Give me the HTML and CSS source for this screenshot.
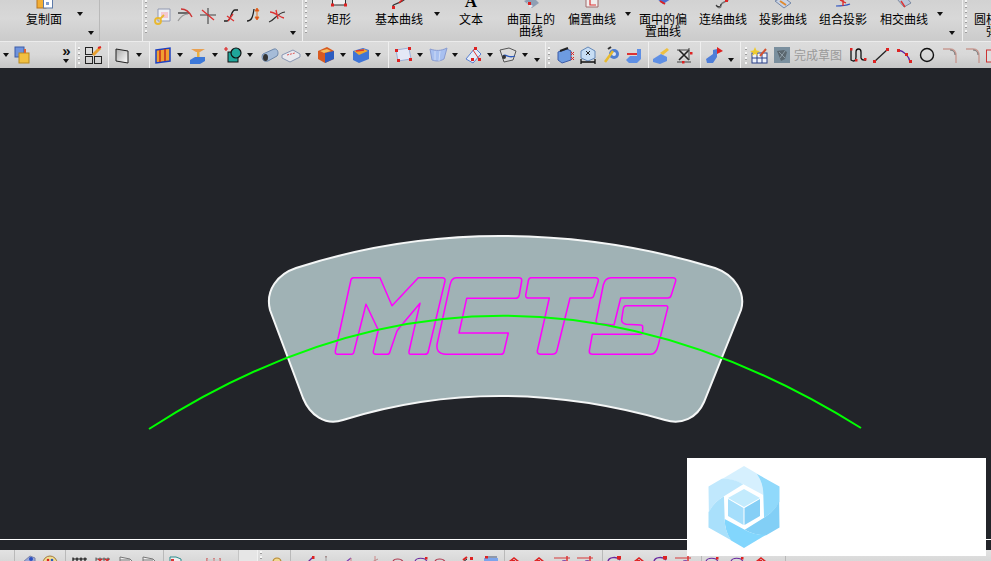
FILE: index.html
```html
<!DOCTYPE html>
<html lang="zh">
<head>
<meta charset="utf-8">
<title>MCTS</title>
<link rel="stylesheet" href="styles.css">
</head>
<body>
<svg class="defs" aria-hidden="true">
  <defs>
    <g id="t-copy"><rect x="3" y="-3" width="9" height="11" fill="#f2ae35" stroke="#b8741e"/><rect x="9.500" y="-2" width="9" height="10" fill="#fff" stroke="#5d7aa8"/><rect x="12" y="2" width="3" height="3" fill="#7c9cd0"/></g>
    <g id="t-rect"><rect x="3.500" y="-6" width="13" height="11" fill="#eee" stroke="#333"/><rect x="2" y="3.500" width="3" height="3" fill="#d22"/><rect x="15" y="3.500" width="3" height="3" fill="#d22"/></g>
    <g id="t-curve"><path d="M4 8C2 3 10 5 16 -1" fill="none" stroke="#333" stroke-width="1.300"/><rect x="3" y="6" width="3" height="3" fill="#d22"/><path d="M10 3L15 -2" stroke="#d22" stroke-width="1.500"/></g>
    <g id="t-surf"><path d="M3 1L12 -3L18 3L11 8Z" fill="#8f9fb4"/><path d="M6 2L12 6L9 8Z" fill="#e6e6ee"/><rect x="7" y="2" width="3" height="3" fill="#d22"/></g>
    <g id="t-offset"><path d="M4 -2H16V7H4Z" fill="#f0eeee" stroke="#a06a6a"/><path d="M8 -1V5H14" fill="none" stroke="#d33" stroke-width="1.200"/></g>
    <g id="t-face"><path d="M3 -2L10 4L18 -1Z" fill="#4c6cd0"/><path d="M7 1L12 4" stroke="#d22" stroke-width="2"/></g>
    <g id="t-join"><path d="M3 5C6 9 8 8 8 5C8 2 13 3 17 -2" fill="none" stroke="#777" stroke-width="1.500"/><path d="M3 5.500C6 8 8 6 8 4" fill="none" stroke="#222"/><rect x="12" y="0" width="3" height="2" fill="#d22"/></g>
    <g id="t-proj"><path d="M2 1L10 -3L18 3L11 8Z" fill="#c9d3e4" stroke="#7487a8"/><path d="M7 1L13 5" stroke="#e08a30" stroke-width="2"/></g>
    <g id="t-comb"><path d="M3 6C7 6 12 6 17 4" fill="none" stroke="#2a4fc0" stroke-width="1.200"/><path d="M10 -2V6M7 0L13 3" stroke="#d22" stroke-width="1.300"/></g>
    <g id="t-inter"><path d="M3 -1L12 -3L17 3L10 7Z" fill="#b9c5d8" stroke="#7c8aa0"/><path d="M7 1L11 7" stroke="#d33" stroke-width="1.400"/></g>

    <g id="m1"><path d="M6 3H18V15H6Z" fill="#eef0f6" stroke="#9098b0"/><rect x="9" y="6" width="7" height="6" fill="#f4c8d0"/><circle cx="6" cy="15" r="3" fill="none" stroke="#e8b830" stroke-width="1.800"/><path d="M8 13L12 9" stroke="#e8b830" stroke-width="1.800"/></g>
    <g id="m2"><path d="M3 7H14" stroke="#222" stroke-width="1.200"/><path d="M3 15C6 10 10 8 13 8" fill="none" stroke="#999" stroke-width="1.200"/><path d="M6 3C11 3 15 7 17 11" fill="none" stroke="#c33" stroke-width="1.300"/></g>
    <g id="m3"><path d="M10 2V18M2 9H18" stroke="#444" stroke-width="1.100"/><path d="M4 4L16 14" stroke="#d33" stroke-width="1.300"/></g>
    <g id="m4"><path d="M3 15H6C10 15 10 4 14 4H17" fill="none" stroke="#222" stroke-width="1.300"/><path d="M6 10L13 15M12 8L7 15" stroke="#d33" stroke-width="1.300"/></g>
    <g id="m5"><path d="M3 15C8 15 9 10 10 3" fill="none" stroke="#222" stroke-width="1.300"/><path d="M13 2L15 5H11ZM13 5V11M13 14L11 11H15Z" fill="#e03020" stroke="#e07020"/></g>
    <g id="m6"><path d="M2 16C8 14 10 7 18 6" fill="none" stroke="#333" stroke-width="1.200"/><path d="M3 6C8 6 12 11 17 12M9 4L11 13" fill="none" stroke="#d33" stroke-width="1.300"/></g>

    <g id="r1"><rect x="3" y="2" width="9" height="10" fill="#6f93dc" stroke="#3c5ca8"/><rect x="7" y="8" width="10" height="10" fill="#f2c040" stroke="#b88a20"/><rect x="12" y="4" width="2" height="4" fill="#e06030"/></g>
    <g id="r2"><rect x="2.500" y="2.500" width="7" height="7" fill="none" stroke="#222"/><rect x="2.500" y="11.500" width="7" height="7" fill="none" stroke="#222"/><rect x="11.500" y="11.500" width="7" height="7" fill="none" stroke="#222"/><path d="M10 10L17 3" stroke="#e8a030" stroke-width="3"/><path d="M15 3L18 2" stroke="#d22" stroke-width="2"/></g>
    <g id="r3"><path d="M4 4L16 6V18L4 16Z" fill="url(#gs)" stroke="#222"/></g>
    <g id="r4"><path d="M3 5L17 3V16L3 18Z" fill="#f2a030" stroke="#1d40c0" stroke-width="1.500"/><path d="M7 5V17M12 4V16" stroke="#c83020" stroke-width="1.600"/></g>
    <g id="r5"><path d="M3 4H17L12 7H8Z" fill="#e8a050"/><rect x="9" y="7" width="2.500" height="6" fill="#e8b040"/><path d="M2 15L7 12H17V16L12 19H2Z" fill="#3c78d8"/></g>
    <g id="r6"><rect x="5" y="7" width="10" height="10" fill="#1fa59a" stroke="#111"/><circle cx="13" cy="8" r="5" fill="#1fa59a" stroke="#111" stroke-width="1.200"/><path d="M3 2V6M1 4H5" stroke="#d22" stroke-width="1.200"/></g>
    <g id="r7"><path d="M3 9L14 4C18 3 19 9 17 11L8 16C2 18 1 11 3 9Z" fill="#a6bcd8" stroke="#6d87aa"/><ellipse cx="5.500" cy="12.500" rx="2.500" ry="3.500" fill="#333"/></g>
    <g id="r8"><path d="M1 10L12 5L19 9V12L9 17L1 13Z" fill="#e9e9ee" stroke="#8a97b4"/><path d="M6 10L14 8" stroke="#d55" stroke-dasharray="2 1"/></g>
    <g id="r9"><path d="M2 6L11 2L18 6V14L9 18L2 14Z" fill="#d85a20"/><path d="M9 8L18 6V14L9 18Z" fill="#2d5cc0"/><path d="M4 6L11 4L15 6L8 8Z" fill="#f2c060"/></g>
    <g id="r10"><path d="M2 6L12 3L18 5V14L8 18L2 15Z" fill="#3f74d6"/><path d="M3 6L13 4L17 6L8 10Z" fill="#f2a62e"/><path d="M5 6L13 5" stroke="#d33" stroke-width="1.500"/></g>
    <g id="r11"><path d="M3 5L16 3L18 14L5 16Z" fill="#e4e8f6" stroke="#9cb0d8"/><g fill="#d22"><rect x="2" y="4" width="3" height="3"/><rect x="15" y="2" width="3" height="3"/><rect x="16" y="13" width="3" height="3"/><rect x="4" y="14" width="3" height="3"/></g></g>
    <g id="r12"><path d="M2 4C8 6 13 6 19 3L16 14C11 17 7 16 4 15Z" fill="#a8c0f0" stroke="#8a9cd0"/><path d="M7 6L7 15M12 6L11 16" stroke="#cfdcf6"/></g>
    <g id="r13"><path d="M3 14L12 3L18 9L10 18Z" fill="#e6ecf8" stroke="#5a80d0"/><path d="M10 5L16 14" stroke="#d33"/><g fill="#d22"><rect x="11" y="2" width="3" height="3"/><rect x="15" y="13" width="3" height="3"/><rect x="8" y="13" width="3" height="3"/></g></g>
    <g id="r14"><path d="M2 5L11 3L18 6L15 15L6 17Z" fill="#dcdcdc" stroke="#555"/><path d="M5 11C8 8 10 14 17 11" fill="none" stroke="#2a5ac0" stroke-width="1.300"/><circle cx="6" cy="12" r="2" fill="#333"/></g>
    <g id="r15"><path d="M3 7L12 4L16 6V15L7 18L3 15Z" fill="#6d9be0" stroke="#3c5ca8"/><path d="M5 6L13 3" stroke="#222" stroke-width="2"/><path d="M16 7L19 10M19 7L16 10M16 12L19 15M19 12L16 15" stroke="#d22"/></g>
    <g id="r16"><path d="M3 6L10 2L17 6V13L10 16L3 13Z" fill="#c7ddf4" stroke="#6488b8"/><path d="M3 17H17M3 14V19M17 14V19" stroke="#111" stroke-width="1.300"/><path d="M8 6L12 10M12 6L8 10" stroke="#222"/></g>
    <g id="r17"><circle cx="13" cy="9" r="5" fill="#4f7ed0"/><circle cx="13" cy="9" r="2" fill="#dfe6f4"/><path d="M4 17L12 6" stroke="#e8bb30" stroke-width="2.500"/><path d="M7 4L10 2" stroke="#333" stroke-width="2"/></g>
    <g id="r18"><path d="M2 15L6 11H13L13 4H17V14L13 18H5Z" fill="#5f8fe4"/><path d="M3 9L13 9" stroke="#d33" stroke-width="2"/></g>
    <g id="r19"><path d="M2 14L10 9L16 12V16L9 19L2 17Z" fill="#5f8fe4"/><path d="M9 8L16 3L18 5L12 10Z" fill="#eec040"/></g>
    <g id="r20"><path d="M5 5L15 15M15 5L5 15" stroke="#222" stroke-width="1.600"/><path d="M3 5H15M3 17H17M15 3V15" stroke="#444"/><g fill="#d22"><rect x="16" y="7" width="2.500" height="2.500"/><rect x="8" y="16" width="2.500" height="2.500"/></g></g>
    <g id="r21"><path d="M2 14L9 9V5L13 4V12L9 18H3Z" fill="#4f7ed8"/><path d="M13 2L19 6L13 9Z" fill="#d22"/></g>
    <g id="r22"><rect x="3" y="8" width="15" height="10" fill="#eef2fa" stroke="#2a4088"/><path d="M3 13H18M8 8V18M13 8V18" stroke="#2a4088"/><path d="M6 2L7.500 5.500L11 6L8 8L9 11L6 9L3 11L4 8L1 6L4.500 5.500Z" fill="#eecb30"/><path d="M11 11L17 4" stroke="#d35030" stroke-width="2"/></g>
    <g id="r23"><rect x="2" y="2" width="16" height="16" fill="#7a8f9e"/><path d="M5 6L12 5L15 7L13 14L9 16L7 11Z" fill="#5a666e"/><path d="M7 7L13 13M13 6L8 13" stroke="#8d9ca6"/></g>
    <g id="r24"><path d="M3 4V15C6 17 8 16 8 12V7C8 3 13 3 13 7V13C14 16 16 15 18 15" fill="none" stroke="#111" stroke-width="1.300"/><g fill="#d22"><rect x="2" y="3" width="2.500" height="2.500"/><rect x="7" y="14" width="2.500" height="2.500"/><rect x="16" y="13" width="2.500" height="2.500"/></g></g>
    <g id="r25"><path d="M3 17L17 4" stroke="#222" stroke-width="1.300"/><rect x="2" y="15" width="3" height="3" fill="#d22"/><rect x="15" y="3" width="3" height="3" fill="#d22"/></g>
    <g id="r26"><path d="M4 5C10 6 15 11 16 17" fill="none" stroke="#5a1fa0" stroke-width="1.300"/><g fill="#d22"><rect x="3" y="4" width="3" height="3"/><rect x="11" y="8" width="3" height="3"/><rect x="15" y="15" width="3" height="3"/></g></g>
    <g id="r27"><circle cx="10" cy="10" r="6.500" fill="none" stroke="#111" stroke-width="1.400"/></g>
    <g id="r28"><path d="M3 4H10C14 4 16 7 16 11V18" fill="none" stroke="#c89a92" stroke-width="1.400"/><path d="M10 5C13 5 15 7 15 10" fill="none" stroke="#777"/></g>
    <g id="r29"><rect x="2.500" y="5" width="5" height="12" fill="#ddd" stroke="#c33"/></g>

    <g id="b-book"><path d="M3 12L10 6L15 8V12Z" fill="#9aa8d8" stroke="#7a82a8"/><circle cx="11" cy="9" r="2" fill="#2a4fc0"/></g>
    <g id="b-pal"><circle cx="10" cy="13" r="7" fill="#f0dd90" stroke="#a07a40"/><circle cx="8" cy="10" r="1.300" fill="#d22"/><circle cx="12" cy="10" r="1.300" fill="#2a5ac0"/></g>
    <g id="b-hash"><path d="M3 9H17M3 7.500V12M7 7.500V12M11 7.500V12M15 7.500V12" stroke="#111" stroke-width="1.200"/></g>
    <g id="b-hashr"><path d="M3 9H17M3 7.500V12M7 7.500V12M11 7.500V12M15 7.500V12" stroke="#555"/><path d="M5 9L9 12M9 9L5 12M12 9L16 12M16 9L12 12" stroke="#d22" stroke-width="1.300"/></g>
    <g id="b-flag"><path d="M4 7L14 9L17 12H4Z" fill="#eee" stroke="#777"/><path d="M4 10H14" stroke="#777"/></g>
    <g id="b-flagc"><path d="M4 7H10L15 9V12H4Z" fill="#eee" stroke="#2a8a8a"/><rect x="5" y="9" width="3" height="3" fill="#d33"/></g>
    <g id="b-small"><path d="M5 8V11M12 8V11M18 8V11" stroke="#c33"/><path d="M5 10H18" stroke="#c8c8c8"/></g>
    <g id="b-ring"><circle cx="10" cy="12" r="4" fill="#f0d890" stroke="#b88a30" stroke-width="1.200"/></g>
    <g id="b-r1"><path d="M8 12L13 7" stroke="#6a2aa0" stroke-width="1.300"/><rect x="12" y="6" width="2.500" height="3" fill="#d22"/></g>
    <g id="b-r2"><path d="M10 7V12" stroke="#a0a0a0"/><rect x="9" y="6" width="2" height="1.500" fill="#a89090"/></g>
    <g id="b-r3"><path d="M4 12L9 8" stroke="#7a3ab0" stroke-width="1.200"/><path d="M9 8V12" stroke="#c88"/></g>
    <g id="b-r4"><path d="M10 6V12" stroke="#c88"/><path d="M7 12L13 9" stroke="#b88"/></g>
    <g id="b-arc"><path d="M5 12C5 8 14 8 15 12" fill="none" stroke="#b03a50" stroke-width="1.200"/></g>
    <g id="b-arcp"><path d="M4 12C4 7 15 7 16 12" fill="none" stroke="#6a2aa0" stroke-width="1.200"/><rect x="14" y="7" width="2.500" height="2.500" fill="#d22"/></g>
    <g id="b-dots"><path d="M5 10L9 7" stroke="#d22" stroke-width="2"/><rect x="12" y="7" width="3" height="3" fill="#d22"/><path d="M5 12L9 9" stroke="#222"/></g>
    <g id="b-blue"><rect x="3" y="8" width="14" height="5" fill="#7ca4ec"/><rect x="4" y="6" width="3" height="2.500" fill="#d22"/><rect x="7" y="6" width="9" height="2" fill="#9098a8"/></g>
    <g id="b-peak"><path d="M6 12L11 8L16 12" fill="none" stroke="#d22" stroke-width="1.600"/><rect x="9" y="10" width="3" height="2" fill="#d22"/></g>
    <g id="b-dash"><path d="M1 8H17" stroke="#d88a8a" stroke-width="2"/><path d="M14 6L14 12" stroke="#d33" stroke-width="1.500"/><path d="M8 12C10 10 13 10 14 12" fill="none" stroke="#6a2aa0"/></g>
    <g id="b-cycle"><path d="M3 12C3 7 12 6 15 10" fill="none" stroke="#6a2aa0" stroke-width="1.400"/><rect x="12" y="6" width="4" height="3.500" fill="#d22"/></g>
    <linearGradient id="gs" x1="0" y1="0" x2="1" y2="1"><stop offset="0" stop-color="#a9a9a9"/><stop offset="1" stop-color="#fff"/></linearGradient>
  </defs>
</svg>

<header class="bars">
  <div class="row row-top">
    <div class="tool w74 pl14"><svg class="ti"><use href="#t-copy"/></svg><span class="lbl">复制面</span></div>
    <b class="ar t w12"></b><b class="ar b w10"></b><i class="sp3"></i><i class="div dim"></i><i class="sp42"></i><i class="div"></i>
    <i class="grip"></i>
    <span class="cell"><svg class="ic"><use href="#m1"/></svg></span>
    <span class="cell"><svg class="ic"><use href="#m2"/></svg></span>
    <span class="cell"><svg class="ic"><use href="#m3"/></svg></span>
    <span class="cell"><svg class="ic"><use href="#m4"/></svg></span>
    <span class="cell"><svg class="ic"><use href="#m5"/></svg></span>
    <span class="cell"><svg class="ic"><use href="#m6"/></svg></span>
    <b class="ar b w10"></b><i class="sp4"></i><i class="div"></i><i class="grip"></i>
    <div class="tool w58"><svg class="ti"><use href="#t-rect"/></svg><span class="lbl">矩形</span></div>
    <div class="tool w62"><svg class="ti"><use href="#t-curve"/></svg><span class="lbl">基本曲线</span></div>
    <b class="ar t w14"></b>
    <div class="tool w54"><span class="glyph">A</span><span class="lbl">文本</span></div>
    <div class="tool w66"><svg class="ti"><use href="#t-surf"/></svg><span class="lbl">曲面上的</span><span class="lbl">曲线</span></div>
    <div class="tool w56"><svg class="ti"><use href="#t-offset"/></svg><span class="lbl">偏置曲线</span></div>
    <b class="ar t w16"></b>
    <div class="tool w54"><svg class="ti"><use href="#t-face"/></svg><span class="lbl">面中的偏</span><span class="lbl">置曲线</span></div>
    <div class="tool w66"><svg class="ti"><use href="#t-join"/></svg><span class="lbl">连结曲线</span></div>
    <div class="tool w54"><svg class="ti"><use href="#t-proj"/></svg><span class="lbl">投影曲线</span></div>
    <div class="tool w66"><svg class="ti"><use href="#t-comb"/></svg><span class="lbl">组合投影</span></div>
    <div class="tool w56"><svg class="ti"><use href="#t-inter"/></svg><span class="lbl">相交曲线</span></div>
    <b class="ar t w16"></b><b class="ar b w8"></b><i class="sp6"></i><i class="div"></i><i class="grip"></i>
    <div class="tool tool-end"><span class="lbl">圆柱形</span><span class="lbl indent">弹簧</span></div>
  </div>

  <div class="row row-mid">
    <b class="ar w12"></b><span class="cell c20"><svg class="ic"><use href="#r1"/></svg></span>
    <i class="sp28"></i><span class="more"><em class="chev">»</em><b class="ar"></b></span><i class="sp2"></i>
    <i class="div"></i><i class="grip"></i><span class="cell c20"><svg class="ic"><use href="#r2"/></svg></span><i class="sp5"></i>
    <i class="div"></i><i class="sp3"></i>
    <span class="pair"><svg class="ic"><use href="#r3"/></svg><b class="ar"></b></span><i class="sp2"></i>
    <i class="div"></i><i class="sp3"></i>
    <span class="pair"><svg class="ic"><use href="#r4"/></svg><b class="ar"></b></span>
    <span class="pair"><svg class="ic"><use href="#r5"/></svg><b class="ar"></b></span>
    <span class="pair"><svg class="ic"><use href="#r6"/></svg><b class="ar"></b></span>
    <span class="cell"><svg class="ic"><use href="#r7"/></svg></span>
    <span class="pair"><svg class="ic"><use href="#r8"/></svg><b class="ar"></b></span>
    <span class="pair"><svg class="ic"><use href="#r9"/></svg><b class="ar"></b></span>
    <span class="pair"><svg class="ic"><use href="#r10"/></svg><b class="ar"></b></span><i class="sp2"></i>
    <i class="div"></i><i class="sp4"></i>
    <span class="pair"><svg class="ic"><use href="#r11"/></svg><b class="ar"></b></span>
    <span class="pair"><svg class="ic"><use href="#r12"/></svg><b class="ar"></b></span>
    <span class="pair"><svg class="ic"><use href="#r13"/></svg><b class="ar"></b></span>
    <span class="pair"><svg class="ic"><use href="#r14"/></svg><b class="ar"></b></span>
    <b class="ar low w8"></b><i class="sp4"></i>
    <i class="div"></i><i class="grip"></i>
    <span class="cell"><svg class="ic"><use href="#r15"/></svg></span>
    <span class="cell"><svg class="ic"><use href="#r16"/></svg></span>
    <span class="cell"><svg class="ic"><use href="#r17"/></svg></span>
    <span class="cell"><svg class="ic"><use href="#r18"/></svg></span><i class="sp3"></i>
    <i class="div"></i>
    <span class="cell"><svg class="ic"><use href="#r19"/></svg></span>
    <span class="cell"><svg class="ic"><use href="#r20"/></svg></span><i class="sp5"></i>
    <i class="div"></i><i class="sp3"></i>
    <span class="cell c20"><svg class="ic"><use href="#r21"/></svg></span><b class="ar low w14"></b><i class="sp2"></i>
    <i class="div"></i><i class="sp2"></i><i class="grip"></i>
    <span class="cell c18"><svg class="ic"><use href="#r22"/></svg></span><i class="sp3"></i>
    <span class="cell c22"><svg class="ic"><use href="#r23"/></svg></span><i class="sp1"></i>
    <span class="done">完成草图</span><i class="sp4"></i>
    <span class="cell"><svg class="ic"><use href="#r24"/></svg></span>
    <span class="cell"><svg class="ic"><use href="#r25"/></svg></span>
    <span class="cell"><svg class="ic"><use href="#r26"/></svg></span>
    <span class="cell"><svg class="ic"><use href="#r27"/></svg></span>
    <span class="cell"><svg class="ic"><use href="#r28"/></svg></span>
    <span class="cell"><svg class="ic"><use href="#r28"/></svg></span>
    <span class="cell clip"><svg class="ic"><use href="#r29"/></svg></span>
  </div>
</header>

<main class="canvas">
  <svg class="drawing" viewBox="0 68 991 482">
    <path class="part" d="M296 268Q395 236 500 236Q610 236 715 268C735 275 746 293 741 310L704 402C697 418 682 425 665 420Q580 396 500 396Q420 396 343 420C325 426 310 415 303 398L270 310C265 290 278 274 296 268Z"/>
    <g class="logo-text">
      <path d="M353.500 277.700H380L392 305.700L418.300 277.700H442Q445.500 277.700 445 281L428.300 351.500Q427.800 354.300 425 354.300H411Q408.500 354.300 409 351.500L420 303.300L401.700 325Q398 329 396.700 331.700L390 351.500Q389.500 354.300 387.300 354.300H376Q373 354.300 373.300 351.500L378.300 330L366 304.300L354 351.500Q353.600 354.300 351.700 354.300H337.700Q335 354.300 335.300 351L350.700 281Q351 277.700 353.500 277.700Z"/>
      <path d="M456 277.700H519Q522 277.700 521.700 281L519.300 295Q518.500 298.300 515.500 298.300H466.700L459 333H508.300L504 351.500Q503.500 354.300 501 354.300H446Q435 354 437.300 343L450 285Q451.500 277.700 456 277.700Z"/>
      <path d="M531 277.700H595.500Q598.500 277.700 598.300 281L594 295Q593.500 298 590.700 298H570L556.700 351.500Q555.500 354.300 552.300 354.300H541Q537 354 537.300 351L549.300 298H528Q525.500 298 525.700 295L528.300 281Q528.800 277.700 531 277.700Z"/>
      <path d="M611 277.700H673Q676 277.700 675.700 281L671.300 295Q670.500 298 668 298H620.700L614 325L598 323.500Q596 323 596 321L603.300 285Q605 277.700 611 277.700Z"/>
      <path d="M626 305.700H666Q668 305.700 667.700 308L658.300 345Q656 354.300 650.700 354.300H592Q589 354 589.300 351L592.300 334.300H640.700Q642.700 334 642.700 332V327Q642.700 325 640.700 325L626 324.300Q621 323 621.700 319L623.300 309Q623.700 305.700 626 305.700Z"/>
    </g>
    <path class="guide" d="M149 429Q500 203 861 428"/>
    <path class="rule" d="M0 539.500H991"/>
  </svg>
  <aside class="stamp">
    <svg class="stamp-logo" viewBox="700 458 90 98">
      <defs><path id="blade" d="M721.700 479.300L744 466L757.300 473.700Q763.300 483.300 763.300 495L743.300 484.300Q733.200 478.400 721.700 479.300Z"/></defs>
      <use href="#blade" fill="#d6f0fe"/>
      <use href="#blade" fill="#90d9fb" transform="rotate(60 744 507)"/>
      <use href="#blade" fill="#82cff6" transform="rotate(120 744 507)"/>
      <use href="#blade" fill="#82d6fd" transform="rotate(180 744 507)"/>
      <use href="#blade" fill="#a9e0fb" transform="rotate(240 744 507)"/>
      <use href="#blade" fill="#c0e8fd" transform="rotate(300 744 507)"/>
      <path d="M744 489L760 498L744 507L728 498Z" fill="#c3ebfd"/>
      <path d="M728 499L743.500 508V525L728 516Z" fill="#a5defb"/>
      <path d="M760 499L744.500 508V525L760 516Z" fill="#86cff6"/>
    </svg>
  </aside>
</main>

<footer class="row row-bot">
  <i class="sp14"></i><i class="div dim"></i><i class="sp5"></i>
  <span class="cell c20"><svg class="ic"><use href="#b-book"/></svg></span>
  <span class="cell c20"><svg class="ic"><use href="#b-pal"/></svg></span><i class="sp5"></i>
  <i class="div dim"></i><i class="sp2"></i>
  <span class="cell"><svg class="ic"><use href="#b-hash"/></svg></span>
  <span class="cell"><svg class="ic"><use href="#b-hashr"/></svg></span>
  <span class="cell"><svg class="ic"><use href="#b-flag"/></svg></span>
  <span class="cell"><svg class="ic"><use href="#b-flag"/></svg></span><i class="sp3"></i>
  <i class="div dim"></i>
  <span class="cell"><svg class="ic"><use href="#b-flagc"/></svg></span>
  <span class="cell c50"><svg class="ic"><use href="#b-small"/></svg></span><i class="sp1"></i>
  <span class="well"></span><i class="grip"></i>
  <span class="cell"><svg class="ic"><use href="#b-ring"/></svg></span><i class="sp2"></i>
  <i class="div dim"></i><i class="sp11"></i>
  <span class="cell c16"><svg class="ic"><use href="#b-r1"/></svg></span>
  <span class="cell c16"><svg class="ic"><use href="#b-r2"/></svg></span><i class="sp6"></i>
  <span class="cell"><svg class="ic"><use href="#b-r3"/></svg></span>
  <span class="cell"><svg class="ic"><use href="#b-r4"/></svg></span>
  <span class="cell"><svg class="ic"><use href="#b-arc"/></svg></span>
  <span class="cell"><svg class="ic"><use href="#b-arcp"/></svg></span>
  <span class="cell c16"><svg class="ic"><use href="#b-arc"/></svg></span><i class="sp8"></i>
  <span class="cell"><svg class="ic"><use href="#b-dots"/></svg></span>
  <span class="cell"><svg class="ic"><use href="#b-blue"/></svg></span><i class="sp2"></i>
  <i class="div dim"></i>
  <span class="cell c16"><svg class="ic"><use href="#b-peak"/></svg></span><i class="sp5"></i>
  <span class="cell"><svg class="ic"><use href="#b-peak"/></svg></span><i class="sp2"></i>
  <span class="cell"><svg class="ic"><use href="#b-dash"/></svg></span>
  <span class="cell"><svg class="ic"><use href="#b-dash"/></svg></span><i class="sp5"></i>
  <i class="div dim"></i>
  <span class="cell"><svg class="ic"><use href="#b-cycle"/></svg></span>
  <span class="cell"><svg class="ic"><use href="#b-peak"/></svg></span>
  <span class="cell"><svg class="ic"><use href="#b-cycle"/></svg></span>
  <span class="cell"><svg class="ic"><use href="#b-dash"/></svg></span><i class="sp6"></i>
  <i class="div dim"></i><i class="sp2"></i>
  <span class="cell c16"><svg class="ic"><use href="#b-arcp"/></svg></span><i class="sp5"></i>
  <span class="cell"><svg class="ic"><use href="#b-arcp"/></svg></span>
  <span class="cell"><svg class="ic"><use href="#b-peak"/></svg></span><i class="sp14"></i>
  <i class="div dim"></i>
</footer>
</body>
</html>
```

FILE: styles.css
```css
* { box-sizing: border-box; }
html, body { margin: 0; height: 100%; }
body {
  width: 991px;
  height: 561px;
  overflow: hidden;
  display: flex;
  flex-direction: column;
  background: #222429;
  font-family: "Noto Sans CJK SC", "Liberation Sans", sans-serif;
  font-size: 12px;
  color: #000;
}
.defs { position: absolute; width: 0; height: 0; }

.bars { flex: none; height: 68px; display: flex; flex-direction: column; }
.row { display: flex; overflow: hidden; flex: none; width: 991px; }
.row-top {
  height: 42px;
  align-items: flex-start;
  background: linear-gradient(#d2d2d2, #d8d8d8 45%, #cbcbcb);
  border-bottom: 1px solid #ececec;
}
.row-mid {
  height: 26px;
  align-items: center;
  background: linear-gradient(#dcdcdc, #d8d8d8 50%, #c6c6c6);
}
.row-bot {
  height: 11px;
  align-items: flex-start;
  background: linear-gradient(#e2e2e2, #d8d8d8);
}

/* spacers */
.row i { flex: none; display: block; }
.sp1 { width: 1px; } .sp2 { width: 2px; } .sp3 { width: 3px; } .sp4 { width: 4px; }
.sp5 { width: 5px; } .sp6 { width: 6px; } .sp8 { width: 8px; } .sp11 { width: 11px; }
.sp14 { width: 14px; } .sp28 { width: 28px; } .sp42 { width: 42px; }

.div { width: 1px; align-self: stretch; background: #efefef; }
.div.dim { background: #b9b9b9; }
.grip {
  width: 7px;
  height: 34px;
  background: repeating-linear-gradient(#f5f5f5 0 2px, #9e9e9e 2px 3px, transparent 3px 5px) 2px 0 / 2px 100% no-repeat;
}
.row-mid .grip { height: 17px; }
.row-bot .grip { height: 11px; margin-top: 1px; }

/* large tools */
.tool {
  flex: none;
  display: flex;
  flex-direction: column;
  align-items: center;
  height: 41px;
  overflow: hidden;
}
.w54 { width: 54px; } .w56 { width: 56px; } .w58 { width: 58px; } .w62 { width: 62px; }
.w66 { width: 66px; } .w74 { width: 74px; } .pl14 { padding-left: 14px; }
.ti { width: 20px; height: 13px; flex: none; }
.glyph {
  flex: none;
  height: 13px;
  font: bold 17px/3px "Liberation Serif", serif;
}
.lbl { display: block; line-height: 12px; white-space: nowrap; flex: none; }
.tool-end { width: 38px; padding-left: 4px; align-items: flex-start; padding-top: 13px; }
.indent { padding-left: 12px; }

/* small arrows */
.ar {
  flex: none;
  display: block;
  width: 15px;
  height: 4px;
  position: relative;
}
.ar::after {
  content: "";
  position: absolute;
  left: 50%;
  top: 0;
  margin-left: -3.500px;
  border: 3.500px solid transparent;
  border-top: 4px solid #111;
  border-bottom: 0;
}
.ar.t { margin-top: 12px; }
.ar.b { margin-top: 31px; }
.ar.low { margin-top: 10px; }
.ar.w8 { width: 8px; } .ar.w10 { width: 10px; } .ar.w12 { width: 12px; }
.ar.w14 { width: 14px; } .ar.w16 { width: 16px; }

/* icon cells */
.cell { flex: none; width: 23px; height: 20px; display: flex; justify-content: center; }
.row-top .cell { margin-top: 6px; }
.row-bot .cell { height: 11px; }
.c16 { width: 16px; } .c18 { width: 18px; } .c20 { width: 20px; } .c22 { width: 22px; } .c50 { width: 50px; }
.clip { justify-content: flex-start; }
.ic { width: 20px; height: 20px; flex: none; }
.row-bot .ic { height: 11px; }
.pair { flex: none; width: 35px; display: flex; align-items: center; }
.more { flex: none; width: 13px; height: 22px; display: flex; flex-direction: column; align-items: center; }
.more .ar { width: 13px; margin-top: 2px; }
.chev { font: bold 15px/13px "Liberation Sans", sans-serif; height: 13px; color: #111; }
.done { flex: none; width: 48px; line-height: 20px; color: #9a9a9a; white-space: nowrap; }
.well { flex: none; width: 20px; height: 11px; background: #e6e6e6; border-left: 1px solid #c4c4c4; border-right: 1px solid #f2f2f2; }

/* canvas */
.canvas { flex: 1; min-height: 0; position: relative; background: #222429; }
.drawing { display: block; width: 991px; height: 482px; }
.part { fill: #a0b2b5; stroke: #f4f6f6; stroke-width: 2; }
.logo-text path { fill: none; stroke: #ff00ff; stroke-width: 1.500; stroke-linejoin: round; }
.guide { fill: none; stroke: #00ff00; stroke-width: 2; }
.rule { stroke: #fff; stroke-width: 1; }
.stamp { position: absolute; left: 687px; top: 390px; width: 299px; height: 98px; background: #fff; z-index: 2; }
.stamp-logo { display: block; width: 90px; height: 98px; margin-left: 13px; }
```
